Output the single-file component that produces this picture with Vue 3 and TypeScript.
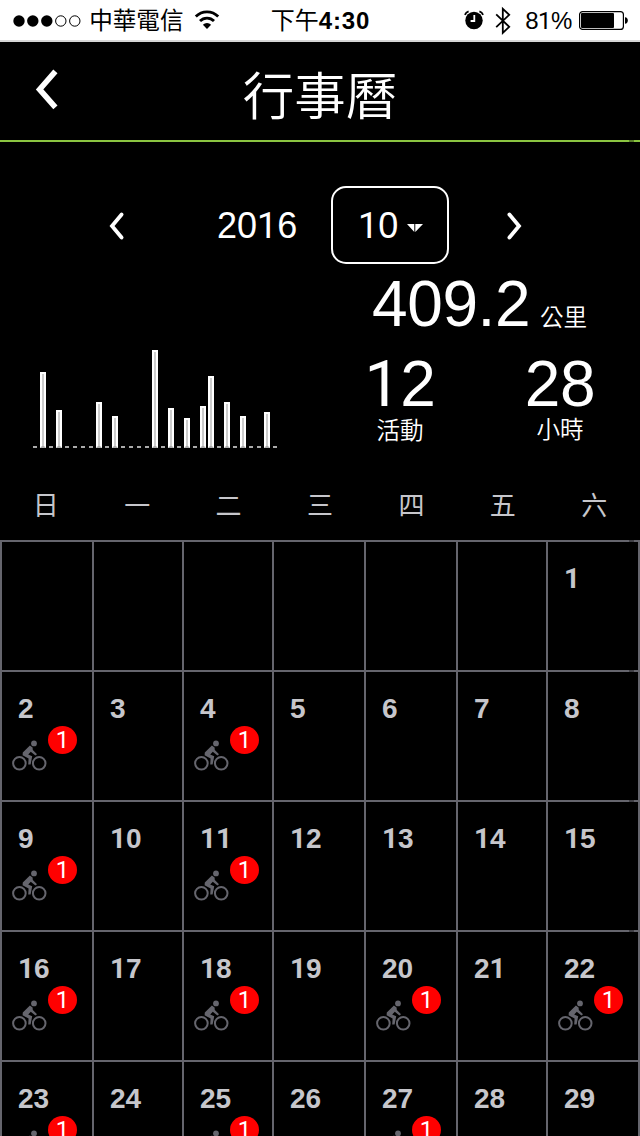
<script setup lang="ts">
import { h } from 'vue'

interface Day {
  day: number | null
  rides: number
}

// The numeral "1" is set without a foot, the other digits in the base face.
const Num = (props: { value: string | number }) =>
  h(
    'span',
    { class: 'num' },
    String(props.value)
      .split(/(1)/)
      .filter((s) => s !== '')
      .map((s) => (s === '1' ? h('span', { class: 'one' }, s) : s)),
  )
Num.props = ['value']

const weekdays = ['日', '一', '二', '三', '四', '五', '六']

const barHeights: Record<number, number> = {
  2: 76, 4: 38, 9: 46, 11: 32, 16: 98, 18: 40,
  20: 30, 22: 42, 23: 72, 25: 46, 27: 32, 30: 36,
}
const chart = Array.from({ length: 31 }, (_, i) => barHeights[i + 1] ?? 0)

const rideDays = [2, 4, 9, 11, 16, 18, 20, 22, 23, 25, 27]
const firstWeekday = 6
const days: Day[] = Array.from({ length: 35 }, (_, i) => {
  const n = i - firstWeekday + 1
  return { day: n > 0 ? n : null, rides: rideDays.includes(n) ? 1 : 0 }
})
</script>

<template>
  <div class="screen">
    <div class="status">
      <svg class="signal" width="64" height="14" viewBox="0 0 64 14">
        <circle cx="6" cy="7" r="5.7" />
        <circle cx="19.8" cy="7" r="5.7" />
        <circle cx="33.8" cy="7" r="5.7" />
        <circle class="off" cx="47.8" cy="7" r="5.2" />
        <circle class="off" cx="61.8" cy="7" r="5.2" />
      </svg>
      <span class="carrier">中華電信</span>
      <svg class="wifi" width="26" height="20" viewBox="0 0 26 20">
        <path d="M1.8 6.6a15.7 15.7 0 0 1 22.4 0M6 11a9.8 9.8 0 0 1 14 0" />
        <path class="solid" d="M13 19l-4.1-4.3a5.8 5.8 0 0 1 8.2 0z" />
      </svg>
      <span class="clock">下午<b>4:30</b></span>
      <svg class="alarm" width="20" height="20" viewBox="0 0 20 20">
        <circle cx="10" cy="10.5" r="8.7" />
        <path class="bell" d="M.9 4.8A6 6 0 0 1 4.6 1.4M19.1 4.8A6 6 0 0 0 15.4 1.4" />
        <path class="hands" d="M10.3 5v6H6.6" />
      </svg>
      <svg class="bluetooth" width="16" height="28" viewBox="0 0 16 28">
        <path d="M1.2 7.4l13 12.4-6.4 6V1.8l6.4 6-13 12.4" />
      </svg>
      <span class="percent"><Num value="81%" /></span>
      <svg class="battery" width="50" height="20" viewBox="0 0 50 20">
        <rect class="case" x=".6" y=".6" width="43.8" height="17.8" rx="3" />
        <rect x="2" y="2" width="33" height="15" rx="1" />
        <path d="M46 6.2q2.8.4 2.8 3.3t-2.8 3.3z" />
      </svg>
    </div>

    <header class="header">
      <svg class="back" width="28" height="44" viewBox="0 0 28 44">
        <path d="M23.4 4.4L7.6 22.4L23.4 40.4" />
      </svg>
      <h1>行事曆</h1>
    </header>

    <section class="picker">
      <svg class="prev" width="18" height="32" viewBox="0 0 18 32">
        <path d="M14.6 4.5L5 16L14.6 27.5" />
      </svg>
      <span class="year"><Num value="2016" /></span>
      <button class="month" type="button">
        <Num value="10" />
        <svg width="16" height="9" viewBox="0 0 16 9"><path d="M0 0h7.3v8zM8.3 0H16L8.3 8z" /></svg>
      </button>
      <svg class="next" width="18" height="32" viewBox="0 0 18 32">
        <path d="M3.4 4.5L13 16L3.4 27.5" />
      </svg>
    </section>

    <section class="summary">
      <div class="chart">
        <div v-for="(v, i) in chart" :key="i" class="slot">
          <div v-if="v" class="bar" :style="{ height: v + 'px' }"></div>
          <div v-else class="dash"></div>
        </div>
      </div>
      <div class="stats">
        <div class="distance">
          <span class="big">409.2</span><span class="unit">公里</span>
        </div>
        <div class="pair">
          <div class="stat">
            <span class="big"><Num value="12" /></span>
            <span class="unit">活動</span>
          </div>
          <div class="stat">
            <span class="big">28</span>
            <span class="unit">小時</span>
          </div>
        </div>
      </div>
    </section>

    <div class="weekdays">
      <span v-for="w in weekdays" :key="w">{{ w }}</span>
    </div>

    <div class="grid">
      <div v-for="(d, i) in days" :key="i" class="cell">
        <template v-if="d.day">
          <span class="date"><Num :value="d.day" /></span>
          <div v-if="d.rides" class="ride">
            <svg class="cyclist" width="36" height="30" viewBox="0 0 36 30">
              <circle class="wheel" cx="7.4" cy="21.3" r="6.3" />
              <circle class="wheel" cx="27.2" cy="21.3" r="6.3" />
              <circle cx="22" cy="1.4" r="2.9" />
              <path d="M17.9 3.4L20.6 5.4L20.8 8L25 12.2L23.4 13.6L18.8 9.8L16.2 12.4L20.2 14.2L18.6 22.6H16.2L16.6 16.6L10.6 13.2L10.8 10.6Z" />
            </svg>
            <span class="badge"><Num :value="d.rides" /></span>
          </div>
        </template>
      </div>
    </div>
    <div class="scrollbar"></div>
  </div>
</template>

<style>
html,
body {
  margin: 0;
  background: #000;
}
.num .one {
  font-family: Roboto, "Liberation Sans", sans-serif;
}
</style>

<style scoped>
.screen {
  position: relative;
  width: 640px;
  height: 1136px;
  overflow: hidden;
  background: #000;
  color: #fff;
  font-family: "Liberation Sans", "Noto Sans CJK TC", sans-serif;
}
svg {
  display: block;
  flex: none;
  overflow: visible;
}
.status {
  display: flex;
  align-items: flex-start;
  height: 40px;
  background: #fff;
  border-bottom: 2px solid #d6d6d6;
  color: #000;
  font-size: 24px;
  line-height: 42px;
  white-space: nowrap;
}
.status span { flex: none; }
.signal { margin: 13.5px 0 0 12.8px; }
.signal .off { fill: none; stroke: #000; stroke-width: 1; }
.carrier { width: 104px; margin-left: 12.4px; font-size: 23.6px; }
.wifi { margin: 10px 0 0 .5px; }
.wifi path { fill: none; stroke: #000; stroke-width: 2.8; }
.wifi .solid { fill: #000; stroke: none; }
.clock { width: 110px; margin-left: 51px; }
.clock b { font-weight: 700; letter-spacing: .9px; }
.alarm { margin: 10px 0 0 83.5px; }
.alarm .bell { fill: none; stroke: #000; stroke-width: 1.8; }
.alarm .hands { fill: none; stroke: #fff; stroke-width: 1.8; }
.bluetooth { margin: 6.6px 0 0 11px; }
.bluetooth path { fill: none; stroke: #000; stroke-width: 1.8; }
.percent { width: 54px; margin-left: 14px; letter-spacing: -.5px; }
.battery { margin: 11px 0 0 0; }
.battery .case { fill: none; stroke: #000; stroke-width: 1.2; }

.header {
  display: grid;
  grid-template-columns: 64px 1fr 64px;
  height: 98px;
  border-bottom: 2px solid #8bc541;
}
.back { margin: 24.6px 0 0 31.5px; }
.back path, .prev path, .next path { fill: none; stroke: #fff; stroke-width: 5.6; }
h1 {
  margin: 0;
  font-size: 51.5px;
  font-weight: 350;
  line-height: 110px;
  text-align: center;
}
.picker {
  display: flex;
  align-items: center;
  height: 78px;
  margin-top: 44px;
  font-size: 36px;
}
.prev { margin: 1px 0 0 107px; }
.prev path, .next path { stroke-width: 3.8; stroke-linecap: round; }
.year { width: 84px; margin-left: 92px; line-height: 78px; padding-top: 2px; }
.month {
  display: flex;
  box-sizing: border-box;
  width: 118px;
  height: 78px;
  margin-left: 30px;
  padding: 0 0 0 25px;
  background: none;
  border: 2px solid #fff;
  border-radius: 15px;
  color: #fff;
  font: 36px/76px "Liberation Sans", sans-serif;
  text-align: left;
}
.month svg { margin: 36px 0 0 9px; fill: #fff; }
.next { margin: 1px 0 0 57px; }

.summary {
  display: flex;
  height: 208px;
}
.chart {
  display: flex;
  align-items: flex-end;
  gap: 4px;
  width: 244px;
  height: 184px;
  margin-left: 33px;
}
.slot { display: flex; justify-content: center; width: 4px; }
.dash { width: 4px; height: 2px; background: #aaa; }
.bar {
  flex: none;
  box-sizing: border-box;
  width: 6px;
  background: #ccc;
  border: solid #fff;
  border-width: 2px 2px 0;
  border-bottom: 2px solid #aaa;
}
.stats { margin-left: 77px; }
.distance { display: flex; height: 80px; margin-left: 18px; }
.distance .big { width: 168px; }
.distance .unit { line-height: 108px; }
.big {
  padding-top: 6px;
  font-size: 64px;
  line-height: 68px;
  letter-spacing: -.4px;
}
.unit { font-size: 23.6px; font-weight: 350; }
.pair { display: flex; }
.stat {
  display: flex;
  flex-direction: column;
  align-items: center;
  width: 92px;
  margin-right: 68px;
}
.stat:last-child { margin-right: 0; }
.stat .unit { margin-top: -1px; line-height: 26px; }

.weekdays {
  display: grid;
  grid-template-columns: repeat(7, 1fr);
  height: 68px;
  color: #c6c6cb;
  font-size: 26px;
  line-height: 68px;
  text-align: center;
}
.grid {
  display: grid;
  grid-template-columns: 92px 90px 90px 92px 92px 90px 92px;
  grid-auto-rows: 130px;
  border-right: 2px solid #65656d;
}
.cell {
  box-sizing: border-box;
  padding: 17px 0 0 16px;
  border-top: 2px solid #65656d;
  border-left: 2px solid #65656d;
}
.date {
  display: block;
  color: #c6c6cb;
  font-size: 28px;
  font-weight: 700;
  line-height: 39px;
}
.ride {
  display: flex;
  align-items: flex-start;
  margin: -2px 0 0 -6px;
}
.cyclist { margin-top: 16px; fill: #65656d; }
.cyclist .wheel { fill: none; stroke: #65656d; stroke-width: 2; }
.badge {
  width: 29px;
  height: 28px;
  border-radius: 50%;
  background: #f00;
  color: #fff;
  font-size: 24px;
  line-height: 28px;
  text-align: center;
}
.scrollbar {
  position: absolute;
  top: 132px;
  left: 629px;
  width: 5px;
  height: 870px;
  border-radius: 3px;
  background: rgba(0, 0, 0, .35);
}
</style>
